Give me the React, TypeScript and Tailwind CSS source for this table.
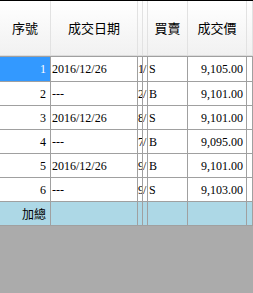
import React from "react";

type Trade = {
    no: number;
    date: string;
    a: string;
    b: string;
    side: string;
    price: string;
};

const trades: Trade[] = [
    { no: 1, date: "2016/12/26", a: "1", b: "/", side: "S", price: "9,105.00" },
    { no: 2, date: "---", a: "2", b: "/", side: "B", price: "9,101.00" },
    { no: 3, date: "2016/12/26", a: "8", b: "/", side: "S", price: "9,101.00" },
    { no: 4, date: "---", a: "7", b: "/", side: "B", price: "9,095.00" },
    { no: 5, date: "2016/12/26", a: "9", b: "/", side: "B", price: "9,101.00" },
    { no: 6, date: "---", a: "9", b: "/", side: "S", price: "9,103.00" },
];

const cjk = "[font-family:'Noto_Sans_CJK_TC','Noto_Sans_CJK_SC',sans-serif]";
const serif = "[font-family:'Liberation_Serif',serif]";

// column widths include the 1px right rule
const W = ["w-[51px]", "w-[87px]", "w-[5px]", "w-[5px]", "w-[40px]", "w-[59px]", "flex-1"];

function HeadCell({ w, label }: { w: string; label?: string }) {
    return (
        <div
            className={`${w} shrink-0 h-full flex items-center justify-center border-r border-[#e2e2e2] text-[13px] text-black ${cjk}`}
        >
            {label}
        </div>
    );
}

function Cell({
    w,
    children,
    align = "left",
    className = "",
}: {
    w: string;
    children?: React.ReactNode;
    align?: "left" | "right";
    className?: string;
}) {
    return (
        <div
            className={`${w} shrink-0 h-full flex items-center overflow-hidden whitespace-nowrap border-r border-[#a0a0a0] ${
                align === "right" ? "justify-end pr-[4px]" : "justify-start pl-[1px]"
            } ${className}`}
        >
            {children}
        </div>
    );
}

export default function App() {
    return (
        <div className="w-[253px] h-[293px] bg-[#ababab] overflow-hidden">
            {/* header */}
            <div className="border-t border-black">
                <div className="h-[55px] flex bg-gradient-to-b from-[#ffffff] to-[#f1f1f1] border-b border-[#dcdcdc]">
                    <HeadCell w={W[0]} label="序號" />
                    <HeadCell w={W[1]} label="成交日期" />
                    <HeadCell w={W[2]} />
                    <HeadCell w={W[3]} />
                    <HeadCell w={W[4]} label="買賣" />
                    <HeadCell w={W[5]} label="成交價" />
                    <HeadCell w={W[6]} />
                </div>
            </div>
            <div className="h-px bg-[#a0a0a0]" />

            {/* rows */}
            <div className={`text-[12px] text-black ${serif}`}>
                {trades.map((t, i) => (
                    <div
                        key={t.no}
                        className={`flex bg-white border-b border-[#a0a0a0] ${i === 0 ? "h-[25px]" : "h-[24px]"}`}
                    >
                        <Cell w={W[0]} align="right" className={i === 0 ? "bg-[#3399ff] text-white" : ""}>
                            {t.no}
                        </Cell>
                        <Cell w={W[1]}>{t.date}</Cell>
                        <Cell w={W[2]} className="!pl-0 justify-end">
                            {t.a}
                        </Cell>
                        <Cell w={W[3]} className="!pl-0">
                            {t.b}
                        </Cell>
                        <Cell w={W[4]}>{t.side}</Cell>
                        <Cell w={W[5]} align="right" className="!pr-[3px]">
                            {t.price}
                        </Cell>
                        <Cell w={W[6]} />
                    </div>
                ))}

                {/* totals */}
                <div className="flex h-[24px] bg-[#add8e6] border-b border-[#a0a0a0]">
                    <Cell w={W[0]} align="right" className={`text-[12px] ${cjk}`}>
                        加總
                    </Cell>
                    <Cell w={W[1]} />
                    <Cell w={W[2]} />
                    <Cell w={W[3]} />
                    <Cell w={W[4]} />
                    <Cell w={W[5]} />
                    <Cell w={W[6]} />
                </div>
            </div>
        </div>
    );
}
